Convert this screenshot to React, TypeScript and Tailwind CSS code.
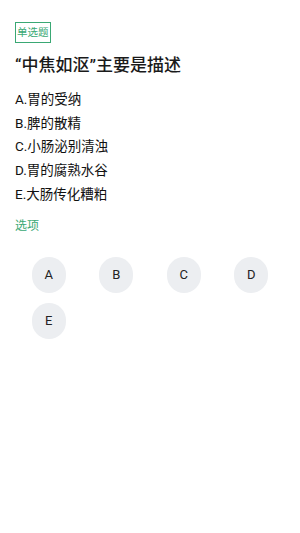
import React from "react";

const options = ["A.胃的受纳", "B.脾的散精", "C.小肠泌别清浊", "D.胃的腐熟水谷", "E.大肠传化糟粕"];
const letters = ["A", "B", "C", "D", "E"];

export default function App() {
  return (
    <div
      className="w-[300px] h-[533px] bg-white px-[15px] pt-[22px] text-[#1a1a1a]"
      style={{ fontFamily: 'Roboto, "Noto Sans CJK SC", sans-serif' }}
    >
      <div className="flex">
        <div className="border border-[#3aa874] text-[#3aa874] text-[10.5px] leading-[19px] px-[1px]">单选题</div>
      </div>
      <div className="mt-[10px] text-[17px] leading-[24px] font-medium">“中焦如沤”主要是描述</div>
      <div className="mt-[11px] flex flex-col">
        {options.map((o) => (
          <div key={o} className="text-[13.5px] leading-[23.7px] text-[#111]">{o}</div>
        ))}
      </div>
      <div className="mt-[10px] text-[12px] leading-[18px] text-[#3aa874]">选项</div>
      <div className="mt-[22px] grid grid-cols-4 gap-y-[10px]">
        {letters.map((l) => (
          <div key={l} className="flex justify-center">
            <div className="w-[34px] h-[36px] rounded-full bg-[#eceef1] flex items-center justify-center text-[13px] text-[#222]">
              {l}
            </div>
          </div>
        ))}
      </div>
    </div>
  );
}
